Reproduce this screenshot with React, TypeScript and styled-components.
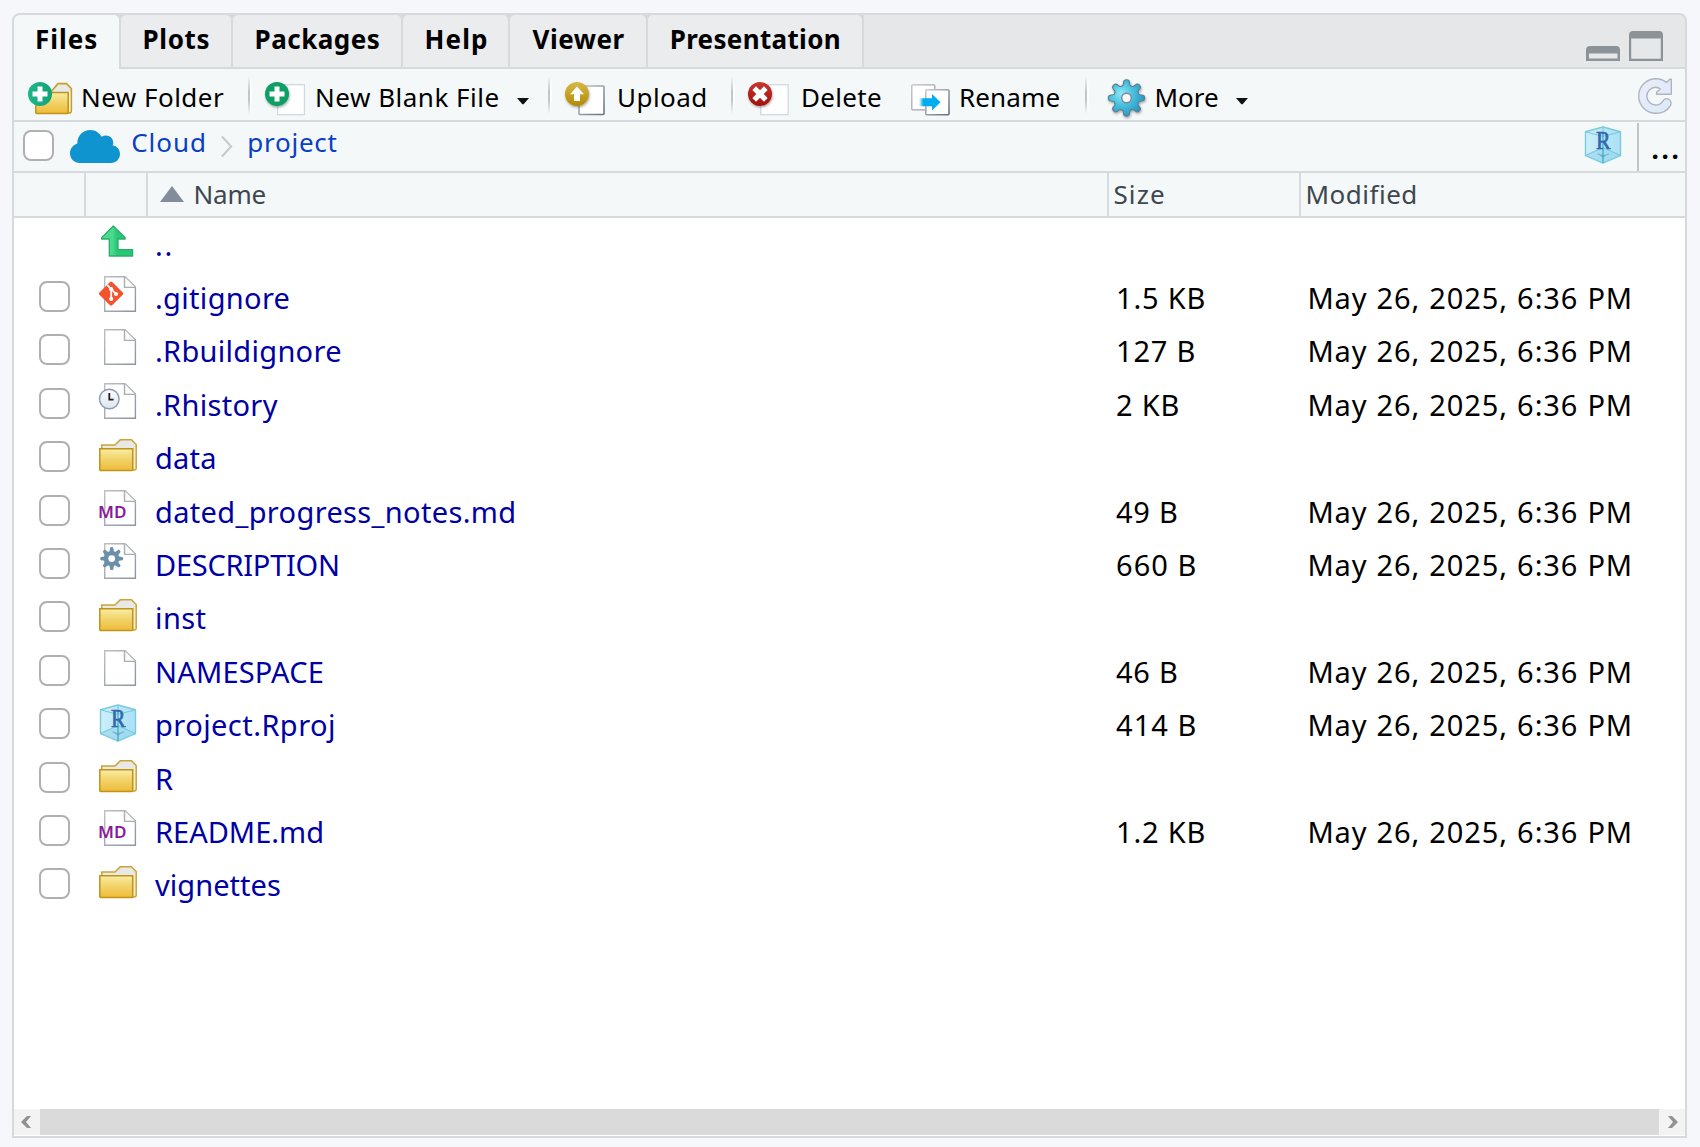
import React from "react";
import styled, { createGlobalStyle } from "styled-components";

const LINE = "#d7dadc";
const SURFACE = "#f4f8f9";

const GlobalStyle = createGlobalStyle`
  * { box-sizing: border-box; }
  html, body, #root { height: 100%; }
  body {
    margin: 0;
    background: #f5f7fa;
    color: #000;
    font-family: "Noto Sans", "Open Sans", sans-serif;
    overflow: hidden;
  }
  svg { display: block; flex: none; overflow: visible; }
`;

const Page = styled.div`
  height: 1147px;
  padding: 13px 13px 9px 12px;
`;

const Panel = styled.main`
  display: flex;
  flex-direction: column;
  height: 1125px;
  border: 2px solid ${LINE};
  border-radius: 8px 8px 0 0;
  background: #fff;
  overflow: hidden;
`;

/* ---------- tabs ---------- */

const TabStrip = styled.nav`
  display: flex;
  height: 54px;
  background: ${LINE};
`;

const Tab = styled.button<{ $width: number; $lead: number; $track: number; $active?: boolean }>`
  width: ${(p) => p.$width}px;
  height: ${(p) => (p.$active ? 54 : 52)}px;
  margin: 0 2px 0 0;
  padding: 0 0 ${(p) => (p.$active ? 6 : 4)}px ${(p) => p.$lead}px;
  border: 0;
  border-radius: 5px 5px 0 0;
  background: ${(p) => (p.$active ? SURFACE : "#ebecee")};
  font: 700 26px "Noto Sans", sans-serif;
  letter-spacing: ${(p) => p.$track}px;
  text-align: left;
  white-space: nowrap;
`;

const WindowControls = styled.div`
  display: flex;
  flex: 1;
  justify-content: flex-end;
  align-items: flex-end;
  gap: 9px;
  height: 52px;
  padding: 0 22px 6px 0;
  background: #e6e7e8;
`;

/* ---------- toolbar ---------- */

const Toolbar = styled.div`
  display: flex;
  height: 53px;
  padding: 0 13px 0 14px;
  border-bottom: 2px solid ${LINE};
  background: ${SURFACE};
`;

const Tool = styled.button<{ $width: number }>`
  display: flex;
  width: ${(p) => p.$width}px;
  height: 51px;
  padding: 0;
  border: 0;
  background: none;
  text-align: left;
`;

const ToolIcon = styled.span<{ $width: number }>`
  flex: none;
  width: ${(p) => p.$width}px;
`;

const ToolLabel = styled.span<{ $track: number }>`
  padding-top: 5px;
  font: 400 26px/46px "Noto Sans", sans-serif;
  letter-spacing: ${(p) => p.$track}px;
  white-space: nowrap;
`;

const Caret = styled.span<{ $gap: number }>`
  align-self: flex-start;
  margin: 29px 0 0 ${(p) => p.$gap}px;
`;

const Divider = styled.span<{ $width: number }>`
  flex: none;
  width: ${(p) => p.$width}px;
  height: 38px;
  margin-top: 7px;
  background:
    linear-gradient(rgba(190, 194, 198, 0), #c3c7ca 40%, #c3c7ca 65%, rgba(190, 194, 198, 0)) 0 0 / 2px 100% no-repeat,
    linear-gradient(rgba(255, 255, 255, 0), #fff 50%, rgba(255, 255, 255, 0)) 2px 0 / 2px 100% no-repeat;
`;

const Spacer = styled.span<{ $width?: number }>`
  flex: ${(p) => (p.$width ? `0 0 ${p.$width}px` : "1")};
`;

/* ---------- breadcrumb ---------- */

const PathBar = styled.div`
  display: flex;
  height: 51px;
  padding-left: 9px;
  border-bottom: 2px solid ${LINE};
  background: ${SURFACE};
`;

const Checkbox = styled.input.attrs({ type: "checkbox" })<{ $top: number }>`
  appearance: none;
  flex: none;
  width: 31px;
  height: 31px;
  margin: ${(p) => p.$top}px 0 0;
  border: 2px solid #b0b0b0;
  border-radius: 8px;
  background: #fff;
`;

const PathIcon = styled.span<{ $left: number; $top: number }>`
  flex: none;
  margin: ${(p) => p.$top}px 0 0 ${(p) => p.$left}px;
`;

const Crumb = styled.a<{ $left: number; $width: number; $track: number }>`
  flex: none;
  width: ${(p) => p.$width}px;
  margin-left: ${(p) => p.$left}px;
  color: #0a3fc4;
  font-size: 26px;
  line-height: 40px;
  letter-spacing: ${(p) => p.$track}px;
  white-space: nowrap;
`;

const MoreDots = styled.button`
  width: 48px;
  height: 48px;
  margin-top: 1px;
  padding: 4px 0 0 12.5px;
  border: 0;
  border-left: 2px solid #c0c4cb;
  background: none;
  font: 700 26px/44px "Noto Sans", sans-serif;
  letter-spacing: 2.7px;
  text-align: left;
`;

/* ---------- file table ---------- */

const columns = "72px 62px 961px 192px 1fr";

const HeaderRow = styled.div`
  display: grid;
  grid-template-columns: ${columns};
  height: 45px;
  border-bottom: 2px solid ${LINE};
  background: ${SURFACE};
`;

const HeaderCell = styled.div<{ $lead?: number; $track?: number; $last?: boolean }>`
  display: flex;
  align-items: flex-start;
  padding-left: ${(p) => p.$lead ?? 0}px;
  border-right: ${(p) => (p.$last ? 0 : 2)}px solid ${LINE};
  color: #3d474f;
  font-size: 26px;
  line-height: 42px;
  letter-spacing: ${(p) => p.$track ?? 0}px;
`;

const SortMark = styled.span`
  width: 33.5px;
  padding-top: 13px;
`;

const FileList = styled.div`
  flex: 1;
  margin-top: -0.4px;
`;

const Row = styled.div`
  display: grid;
  grid-template-columns: ${columns};
  height: 53.42px;
`;

const CheckCell = styled.div`
  padding-left: 25px;
`;

const IconCell = styled.div`
  padding: 4px 0 0 12px;
`;

const TextCell = styled.div<{ $track: number; $lead?: number; $word?: number; $link?: boolean }>`
  padding-left: ${(p) => p.$lead ?? 7}px;
  color: ${(p) => (p.$link ? "#0000a4" : "#000")};
  font-size: 29px;
  line-height: 54px;
  letter-spacing: ${(p) => p.$track}px;
  word-spacing: ${(p) => p.$word ?? 0}px;
  white-space: pre;
`;

/* ---------- scrollbar ---------- */

const ScrollBar = styled.div`
  display: flex;
  height: 26px;
  margin-bottom: 1px;
`;

const ScrollButton = styled.span<{ $end?: boolean }>`
  display: flex;
  align-items: center;
  justify-content: ${(p) => (p.$end ? "flex-end" : "flex-start")};
  width: 26px;
  padding: 0 7px;
  background: #f3f3f3;
`;

const ScrollThumb = styled.span`
  flex: 1;
  background: #dadada;
`;

/* ---------- drawings ---------- */

function gearPath(cx: number, cy: number, inner: number, outer: number) {
  const mid = (inner + outer) / 2;
  const half = (outer - inner) / 2;
  const points: string[] = [];
  for (let i = 0; i < 192; i++) {
    const a = (i / 192) * Math.PI * 2;
    const wave = Math.tanh(Math.cos(8 * a) * 1.9) / Math.tanh(1.9);
    const r = mid + half * wave;
    points.push(`${(cx + r * Math.cos(a)).toFixed(2)} ${(cy + r * Math.sin(a)).toFixed(2)}`);
  }
  return `M${points.join("L")}Z`;
}

const Defs = styled.svg`
  position: absolute;
`;

const Gradients = () => (
  <Defs width="0" height="0">
    <defs>
      <linearGradient id="folder" x1="0" y1="0" x2="0" y2="1">
        <stop offset="0" stopColor="#f8eda6" />
        <stop offset=".45" stopColor="#f2d46c" />
        <stop offset="1" stopColor="#efbb38" />
      </linearGradient>
      <linearGradient id="pageEdge" x1="0" y1="0" x2="1" y2="1">
        <stop offset="0" stopColor="#bcbfc1" />
        <stop offset="1" stopColor="#8f959b" />
      </linearGradient>
      <linearGradient id="darkEdge" x1="0" y1="0" x2="1" y2="1">
        <stop offset="0" stopColor="#c9ccd1" />
        <stop offset="1" stopColor="#65707f" />
      </linearGradient>
      <linearGradient id="gold" x1="0" y1="0" x2="0" y2="1">
        <stop offset="0" stopColor="#d8b948" />
        <stop offset="1" stopColor="#b38a04" />
      </linearGradient>
      <linearGradient id="red" x1="0" y1="0" x2="0" y2="1">
        <stop offset="0" stopColor="#c83730" />
        <stop offset="1" stopColor="#a30f0c" />
      </linearGradient>
      <linearGradient id="teal" x1="0" y1="0" x2="1" y2="0">
        <stop offset="0" stopColor="#1fb58b" />
        <stop offset="1" stopColor="#10a378" />
      </linearGradient>
      <linearGradient id="slide" x1="0" y1="0" x2="1" y2="0">
        <stop offset="0" stopColor="#00aeef" stopOpacity="0" />
        <stop offset=".2" stopColor="#00aeef" />
      </linearGradient>
      <radialGradient id="gear" cx=".36" cy=".38" r=".66">
        <stop offset="0" stopColor="#8fe9f8" />
        <stop offset=".45" stopColor="#4cc3e0" />
        <stop offset="1" stopColor="#2796c2" />
      </radialGradient>
      <linearGradient id="clock" x1="0" y1="0" x2="0" y2="1">
        <stop offset="0" stopColor="#fbfcfe" />
        <stop offset="1" stopColor="#dfe6ef" />
      </linearGradient>
      <linearGradient id="reload" x1="0" y1="0" x2="1" y2="1">
        <stop offset="0" stopColor="#ebecf8" />
        <stop offset="1" stopColor="#dceafa" />
      </linearGradient>
      <linearGradient id="cube" x1="0" y1="0" x2="1" y2="0">
        <stop offset="0" stopColor="#cdeff9" />
        <stop offset="1" stopColor="#aae0f6" />
      </linearGradient>
      <linearGradient id="up" x1="0" y1="0" x2="1" y2="0">
        <stop offset=".35" stopColor="#4bd98f" />
        <stop offset=".5" stopColor="#27c776" />
      </linearGradient>
      <filter id="drop" x="-30%" y="-30%" width="170%" height="170%">
        <feDropShadow dx="0.6" dy="1.4" stdDeviation="1" floodColor="#000" floodOpacity=".35" />
      </filter>
    </defs>
  </Defs>
);

const Badge = ({ fill, shadow = true, children }: { fill: string; shadow?: boolean; children: React.ReactNode }) => (
  <g>
    <circle cx="12" cy="25" r="12" fill={fill} filter={shadow ? "url(#drop)" : undefined} />
    {children}
  </g>
);

const Plus = () => <path d="M12 17.5v15M4.5 25h15" stroke="#fff" strokeWidth="5" fill="none" />;

const NewFolderIcon = () => (
  <svg width="46" height="51">
    <path d="M22 24L30 14.7H38.5L43.3 19.5V41.5Q43.3 44 41 44H38" fill="#e9e9e8" stroke="#c7a02c" strokeWidth="1.7" />
    <path d="M41.6 22V43" stroke="#fbf3d6" strokeWidth="1.5" />
    <path d="M7.8 23.5H40.2V43.5Q40.2 44.6 39 44.6H9Q7.8 44.6 7.8 43.4Z" fill="url(#folder)" stroke="#bf9418" strokeWidth="1.5" />
    <Badge fill="url(#teal)" shadow={false}><Plus /></Badge>
  </svg>
);
const NewFileIcon = () => (
  <svg width="46" height="51">
    <rect x="12.7" y="15.7" width="26.7" height="30" fill="#fff" stroke="#cfdae3" strokeWidth="1.3" />
    <Badge fill="#0a9f63"><Plus /></Badge>
  </svg>
);
const UploadIcon = () => (
  <svg width="46" height="51">
    <rect x="14" y="17" width="25" height="28.5" rx="1" fill="#fff" stroke="url(#darkEdge)" strokeWidth="1.6" />
    <Badge fill="url(#gold)">
      <path d="M12 17.5L19 25.2H15V32H9V25.2H5Z" fill="#fff" />
    </Badge>
  </svg>
);
const DeleteIcon = () => (
  <svg width="46" height="51">
    <rect x="12.7" y="15.7" width="27.5" height="30" fill="#fff" stroke="#cfdae3" strokeWidth="1.3" />
    <Badge fill="url(#red)">
      <path d="M6.2 19.2L17.8 30.8M17.8 19.2L6.2 30.8" stroke="#fff" strokeWidth="5.2" fill="none" />
    </Badge>
  </svg>
);
const RenameIcon = () => (
  <svg width="46" height="51">
    <rect x=".8" y="15.8" width="23" height="25" rx="1" fill="#fff" stroke="url(#pageEdge)" strokeWidth="1.3" />
    <rect x="14.8" y="20.8" width="23.2" height="25" rx="1" fill="#fff" stroke="url(#darkEdge)" strokeWidth="1.6" />
    <path d="M8 29.3H21V25L29.5 33.3L21 41.5V37.3H8Z" fill="url(#slide)" />
  </svg>
);
const GearIcon = () => (
  <svg width="46" height="51">
    <path
      d={gearPath(18.5, 29, 12.8, 18.1)}
      fill="url(#gear)"
      stroke="#58808f"
      strokeWidth="1.2"
      filter="url(#drop)"
    />
    <circle cx="18.5" cy="29" r="4.8" fill="#f7f8fa" stroke="#7d8794" strokeWidth="1.4" />
  </svg>
);
const CaretIcon = () => (
  <svg width="12" height="7"><path d="M0 0H12L6.6 6.3H5.4Z" fill="#111" /></svg>
);
const ReloadIcon = () => (
  <svg width="34" height="36">
    <path
      d="M33.3 1.2V16.2H18.6V14.3L22.3 11C20.8 9.7 19.2 9.2 17.6 9.2A8.8 8.8 0 1 0 17.9 27C21 27 23.1 25.6 24.6 23.6C25.8 20.8 28.5 19.7 31 21.5C33.6 23.4 33.4 25.5 32.4 27.6C29.3 32.7 24 35.3 18 35.3A17.3 17.3 0 1 1 18 .7C22 .7 25.6 2 28.5 4.4L31.7 1.2Z"
      fill="url(#reload)" stroke="#b0b4c0" strokeWidth="1.4" strokeLinejoin="round"
    />
  </svg>
);
const CloudIcon = () => (
  <svg width="50" height="33">
    <path
      d="M10 33C4 33 0 28.5 0 23.2C0 18.5 3 15 7.3 13.5C7.3 5.5 13 0 20.2 0C25.6 0 29.4 2.8 31.6 6.8C37 3.6 43.5 7.2 43.3 13.2C43.2 14 43 14.6 42.6 15.2C47 16 50 19.4 50 24C50 29 46 33 41 33Z"
      fill="#1094cf"
    />
  </svg>
);
const ChevronIcon = () => (
  <svg width="12" height="21"><path d="M1 .5L10.2 10.5L1 20.5" fill="none" stroke="#c5cad1" strokeWidth="2" /></svg>
);
const Cube = () => (
  <svg width="40" height="40">
    <path d="M20 3L37.5 7.8V31.5L20 39L2.5 31.5V7.8Z" fill="url(#cube)" stroke="#7ccadd" strokeWidth="1.4" strokeLinejoin="round" />
    <path d="M2.5 31.5L20 23.5L37.5 31.5L20 39Z" fill="#93d6ee" opacity=".6" />
    <path d="M2.5 7.8L20 12.5L37.5 7.8M20 12.5V3M2.5 31.5L20 23.5L37.5 31.5" fill="none" stroke="#74cbdc" strokeWidth="1.1" />
    <path d="M14.5 29.8L18.5 31.2H22L26 29.8M17 31L20 33L23.5 30.6" fill="none" stroke="#7dabc9" strokeWidth="1.1" />
    <path d="M20 9V39" stroke="#2eaeb7" strokeWidth="1.2" />
    <text x="20.3" y="25" textAnchor="middle" fontFamily="Liberation Serif, serif" fontSize="24.5" textLength="14.5" lengthAdjust="spacingAndGlyphs" fill="#3567b0" stroke="#3567b0" strokeWidth=".7">R</text>
  </svg>
);
const MinimizeIcon = () => (
  <svg width="34" height="15">
    <path d="M0 15V4Q0 0 4 0H30Q34 0 34 4V15ZM3 7.5V12.5H31.5V7.5Z" fillRule="evenodd" fill="#8b9398" />
  </svg>
);
const MaximizeIcon = () => (
  <svg width="34" height="30">
    <path d="M0 30V4Q0 0 4 0H30Q34 0 34 4V30ZM2.2 7.5V27.8H31.8V7.5Z" fillRule="evenodd" fill="#8b9398" />
  </svg>
);
const SortIcon = () => (
  <svg width="24" height="16"><path d="M12 0L24 16H0Z" fill="#828c9b" /></svg>
);
const ScrollArrow = ({ flip }: { flip?: boolean }) => (
  <svg width="10" height="12" viewBox="0 0 10 12">
    <path d={flip ? "M0 0H4L10 6L4 12H0L5 6Z" : "M10 0H6L0 6L6 12H10L5 6Z"} fill="#919191" />
  </svg>
);

const Sheet = ({ children }: { children?: React.ReactNode }) => (
  <svg width="40" height="40">
    <path d="M6.7 1.7H27L37.4 12V36.3H6.7Z" fill="#fff" stroke="url(#pageEdge)" strokeWidth="1.4" />
    <path d="M26.5 1.7V12.4H37.4" fill="#fafafa" stroke="#a9aeb2" strokeWidth="1.4" />
    {children}
  </svg>
);
const GitFile = () => (
  <Sheet>
    <path d="M13 6.5Q13.6 6.5 14.2 7.1L25 17.8Q25.6 18.7 25 19.5L14.2 30.3Q13 31.2 12 30.3L1.2 19.5Q.6 18.7 1.2 17.8L12 7.1Q12.4 6.5 13 6.5Z" fill="#f4512c" />
    <path d="M9.2 10L13.2 14V24.5M13.2 14L18 19" fill="none" stroke="#fff" strokeWidth="1.8" />
    <circle cx="13.2" cy="14.2" r="2.1" fill="#fff" />
    <circle cx="13.2" cy="24" r="2.1" fill="#fff" />
    <circle cx="18" cy="19" r="2.1" fill="#fff" />
  </Sheet>
);
const HistoryFile = () => (
  <Sheet>
    <circle cx="11.3" cy="17" r="9.8" fill="url(#clock)" stroke="#8c9bb3" strokeWidth="1.4" />
    <path d="M11.3 11V17.7H15.6" fill="none" stroke="#222" strokeWidth="1.8" />
  </Sheet>
);
const MarkdownFile = () => (
  <Sheet>
    <text x="0" y="28.5" fontFamily="Noto Sans, sans-serif" fontSize="16.5" fontWeight="600" textLength="28.5" lengthAdjust="spacingAndGlyphs" fill="#8a1a94">MD</text>
  </Sheet>
);
const ConfigFile = () => (
  <Sheet>
    <path d={gearPath(13.7, 16.6, 7.6, 11.5)} fill="#6b90aa" />
    <circle cx="13.7" cy="16.6" r="3.4" fill="#fff" />
  </Sheet>
);
const FolderIcon = () => (
  <svg width="40" height="40">
    <path d="M3.7 14V10H17L22.3 4.8H33.5L38.2 9.5V33Q38.2 35 36.3 35H34" fill="#e8e8e7" stroke="#c9a437" strokeWidth="1.5" />
    <path d="M36.4 12V34" stroke="#f6ecc4" strokeWidth="1.4" />
    <path d="M1.8 13.8H34.7V34.5Q34.7 35.6 33.6 35.6H2.9Q1.8 35.6 1.8 34.5Z" fill="url(#folder)" stroke="#bf9418" strokeWidth="1.5" />
  </svg>
);
const ParentIcon = () => (
  <svg width="40" height="40">
    <path d="M15.3 4L27.2 15.8V17H20V27.7H34.6V34H11.3V17H3.6V15.8Z" fill="url(#up)" stroke="#2bae6b" strokeWidth="1.3" strokeLinejoin="round" />
  </svg>
);

/* ---------- data ---------- */

const tabs = [
  { name: "Files", width: 105, lead: 21, track: 1, active: true },
  { name: "Plots", width: 110, lead: 21.5, track: 0.64 },
  { name: "Packages", width: 168, lead: 21.5, track: 0.5 },
  { name: "Help", width: 105, lead: 21.5, track: 1.11 },
  { name: "Viewer", width: 136, lead: 22.5, track: 0.51 },
  { name: "Presentation", width: 214, lead: 21.7, track: 0.33 },
];

const when = "May 26, 2025, 6:36 PM";
type Entry = [name: string, track: number, Icon: React.FC, size?: string, sizeTrack?: number];
const entries: Entry[] = [
  [".gitignore", 0.32, GitFile, "1.5 KB", 0.81],
  [".Rbuildignore", 0.3, Sheet, "127 B", 0.8],
  [".Rhistory", 0.32, HistoryFile, "2 KB", 0.81],
  ["data", 0.2, FolderIcon],
  ["dated_progress_notes.md", 0.34, MarkdownFile, "49 B", 0.76],
  ["DESCRIPTION", -0.26, ConfigFile, "660 B", 1.05],
  ["inst", 0.4, FolderIcon],
  ["NAMESPACE", 0.18, Sheet, "46 B", 0.76],
  ["project.Rproj", 0.45, Cube, "414 B", 1.05],
  ["R", 0, FolderIcon],
  ["README.md", 0, MarkdownFile, "1.2 KB", 0.81],
  ["vignettes", 0.05, FolderIcon],
];

export default function App() {
  return (
    <Page>
      <GlobalStyle />
      <Gradients />
      <Panel>
        <TabStrip>
          {tabs.map((t) => (
            <Tab key={t.name} $width={t.width} $lead={t.lead} $track={t.track} $active={t.active}>
              {t.name}
            </Tab>
          ))}
          <WindowControls>
            <MinimizeIcon />
            <MaximizeIcon />
          </WindowControls>
        </TabStrip>

        <Toolbar>
          <Tool $width={220}>
            <ToolIcon $width={53}><NewFolderIcon /></ToolIcon>
            <ToolLabel $track={0.47}>New Folder</ToolLabel>
          </Tool>
          <Divider $width={17} />
          <Tool $width={283}>
            <ToolIcon $width={50}><NewFileIcon /></ToolIcon>
            <ToolLabel $track={0.51}>New Blank File</ToolLabel>
            <Caret $gap={17}><CaretIcon /></Caret>
          </Tool>
          <Divider $width={17} />
          <Tool $width={166}>
            <ToolIcon $width={52}><UploadIcon /></ToolIcon>
            <ToolLabel $track={0.45}>Upload</ToolLabel>
          </Tool>
          <Divider $width={17} />
          <Tool $width={163}>
            <ToolIcon $width={53}><DeleteIcon /></ToolIcon>
            <ToolLabel $track={0.32}>Delete</ToolLabel>
          </Tool>
          <Tool $width={174}>
            <ToolIcon $width={48}><RenameIcon /></ToolIcon>
            <ToolLabel $track={0.14}>Rename</ToolLabel>
          </Tool>
          <Divider $width={23} />
          <Tool $width={150}>
            <ToolIcon $width={46.5}><GearIcon /></ToolIcon>
            <ToolLabel $track={0}>More</ToolLabel>
            <Caret $gap={17.5}><CaretIcon /></Caret>
          </Tool>
          <Spacer />
          <PathIcon $left={0} $top={9}><ReloadIcon /></PathIcon>
        </Toolbar>

        <PathBar>
          <Checkbox $top={8} aria-label="Select all" />
          <PathIcon $left={15.7} $top={8}><CloudIcon /></PathIcon>
          <Crumb $left={11.5} $width={89.8} $track={0.95}>Cloud</Crumb>
          <PathIcon $left={0} $top={14}><ChevronIcon /></PathIcon>
          <Crumb $left={14.3} $width={100} $track={0.75}>project</Crumb>
          <Spacer />
          <PathIcon $left={0} $top={2}><Cube /></PathIcon>
          <Spacer $width={14.5} />
          <MoreDots>...</MoreDots>
        </PathBar>

        <HeaderRow>
          <HeaderCell />
          <HeaderCell />
          <HeaderCell $lead={12} $track={-0.22}>
            <SortMark><SortIcon /></SortMark>
            Name
          </HeaderCell>
          <HeaderCell $lead={4.5} $track={1.1}>Size</HeaderCell>
          <HeaderCell $lead={4.5} $track={0.5} $last>Modified</HeaderCell>
        </HeaderRow>

        <FileList>
          <Row>
            <CheckCell />
            <IconCell><ParentIcon /></IconCell>
            <TextCell $link $track={1.73}>..</TextCell>
          </Row>
          {entries.map(([name, track, Icon, size, sizeTrack]) => (
            <Row key={name}>
              <CheckCell><Checkbox $top={10} aria-label={name} /></CheckCell>
              <IconCell><Icon /></IconCell>
              <TextCell $link $track={track}>{name}</TextCell>
              <TextCell $track={sizeTrack ?? 0}>{size}</TextCell>
              <TextCell $lead={6.4} $track={0.92} $word={0.6}>{size ? when : ""}</TextCell>
            </Row>
          ))}
        </FileList>

        <ScrollBar>
          <ScrollButton><ScrollArrow /></ScrollButton>
          <ScrollThumb />
          <ScrollButton $end><ScrollArrow flip /></ScrollButton>
        </ScrollBar>
      </Panel>
    </Page>
  );
}
